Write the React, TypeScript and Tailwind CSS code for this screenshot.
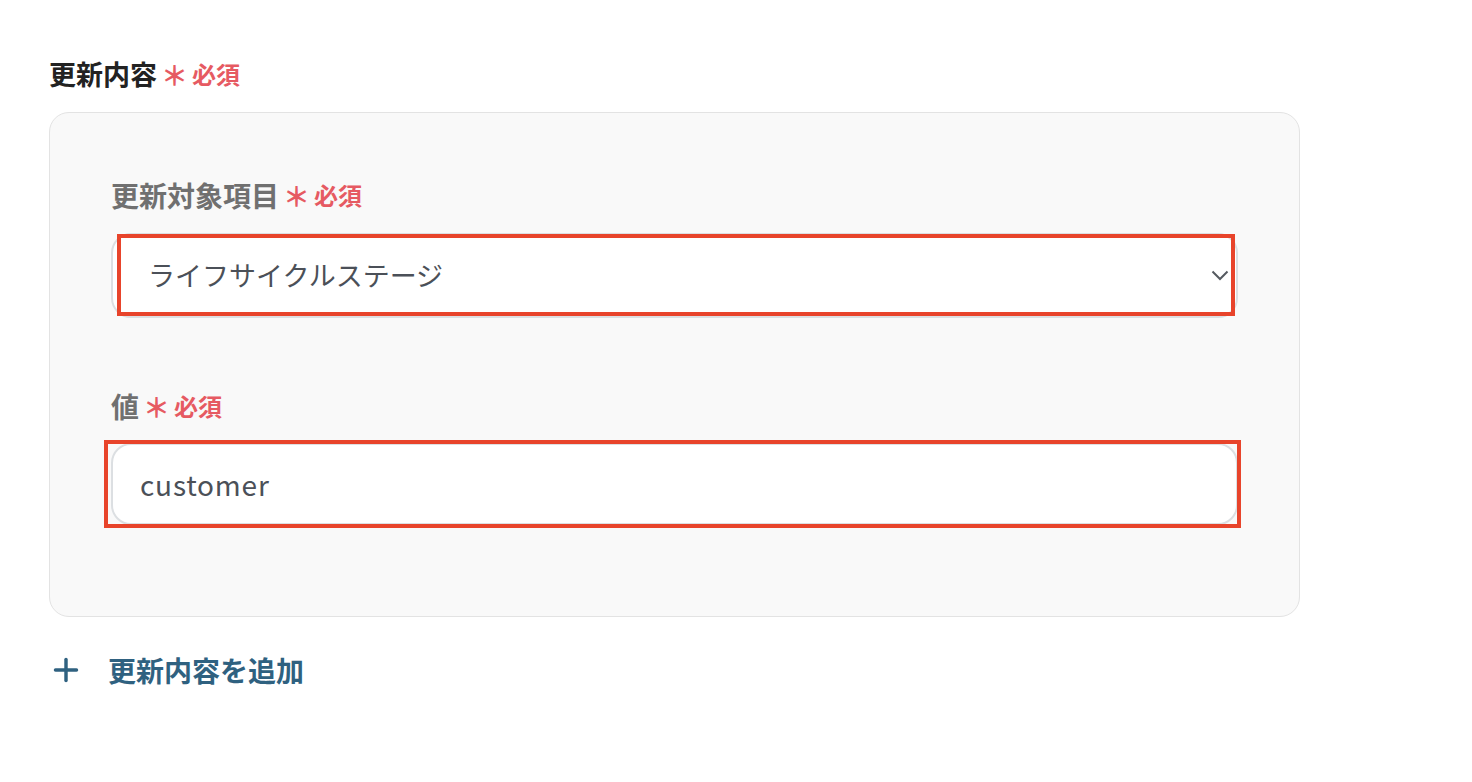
import { Plus } from "lucide-react";

const font = { fontFamily: '"Noto Sans CJK JP", "Noto Sans", sans-serif' };

function Required() {
  return (
    <span className="ml-[4px] inline-flex items-center gap-[4px] text-[#e65a62] font-bold">
      <span className="text-[27px] leading-none">＊</span>
      <span className="text-[24px]">必須</span>
    </span>
  );
}

export default function App() {
  return (
    <div className="min-h-[782px] bg-white pl-[49px] pt-[54px]" style={font}>
      <div className="flex items-center h-[40px] text-[27px] font-bold text-[#222]">
        更新内容
        <Required />
      </div>

      <div className="mt-[18px] w-[1251px] rounded-[20px] border border-[#e3e3e3] bg-[#f9f9f9] pl-[61px] pr-[61px] pt-[62px] pb-[91px]">
        <div className="flex items-center h-[40px] text-[28px] font-bold text-[#707070]">
          更新対象項目
          <Required />
        </div>
        <div className="relative mt-[18px] h-[85px]">
          <div className="flex h-full items-center justify-between rounded-[20px] border-2 border-[#dcdfe2] bg-white pl-[35px] pr-[7px]">
            <span className="text-[27px] text-[#4b5058]">ライフサイクルステージ</span>
            <svg width="18" height="11" viewBox="0 0 18 11" fill="none">
              <path d="M1.5 1.5 L9 9 L16.5 1.5" stroke="#555a60" strokeWidth="2" />
            </svg>
          </div>
          <div className="pointer-events-none absolute left-[6px] top-[1px] right-[3px] bottom-[2px] border-4 border-[#e8442b]" />
        </div>

        <div className="mt-[68px] flex items-center h-[40px] text-[28px] font-bold text-[#707070]">
          値
          <Required />
        </div>
        <div className="relative mt-[17px] h-[82px]">
          <div className="flex h-full items-center rounded-[20px] border-2 border-[#dcdfe2] bg-white pl-[27px]">
            <span className="text-[28px] tracking-[0.8px] text-[#4b5058]">customer</span>
          </div>
          <div className="pointer-events-none absolute -left-[7px] -top-[3px] -right-[3px] -bottom-[3px] border-4 border-[#e8442b]" />
        </div>
      </div>

      <div className="mt-[33px] flex items-center h-[40px] text-[#2f6180] font-bold">
        <Plus className="-ml-[1px] h-[36px] w-[36px]" strokeWidth={2.3} />
        <span className="ml-[24px] text-[28px]">更新内容を追加</span>
      </div>
    </div>
  );
}
